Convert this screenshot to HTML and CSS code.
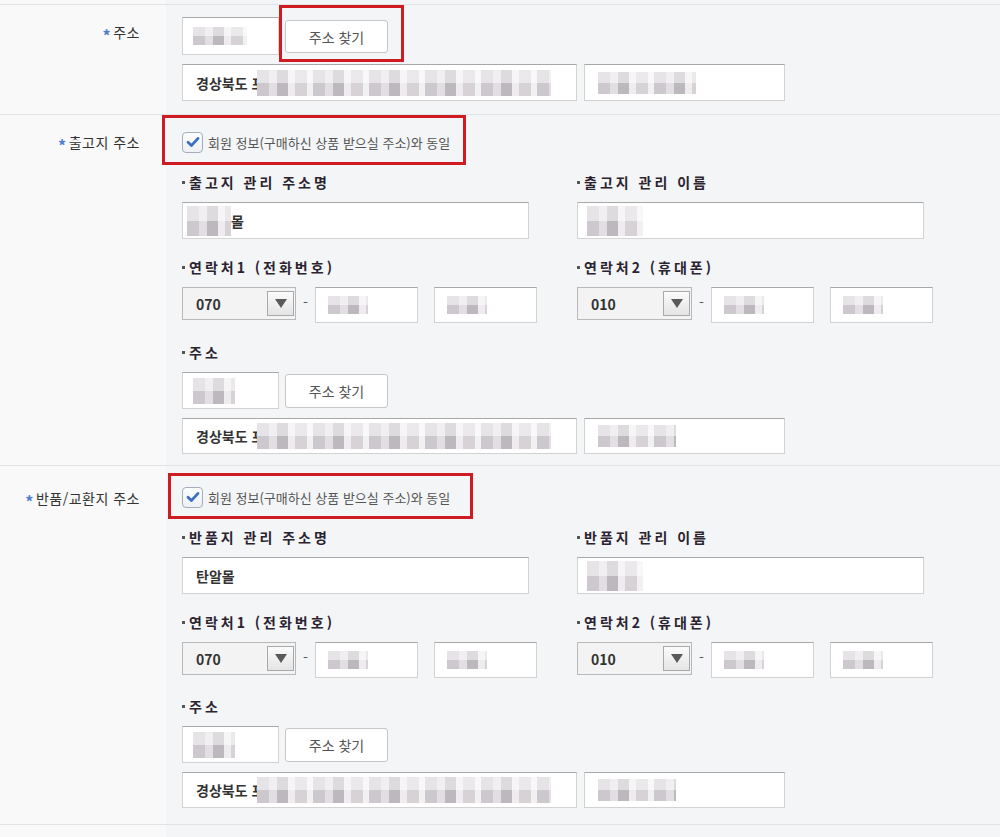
FILE: index.html
```html
<!DOCTYPE html>
<html lang="ko">
<head>
    <meta charset="UTF-8">
    <meta name="viewport" content="width=device-width, initial-scale=1.0">
    <title>판매자 정보 - 주소 설정</title>
    <link rel="stylesheet" href="styles.css">
</head>
<body>
    <div class="form">
        <!-- 주소 -->
        <div class="row row-addr">
            <div class="label"><span class="req">*</span>주소</div>
            <div class="content">
                <div class="line top-line">
                    <div class="field zip zip-top"><span class="blur b-zip"></span></div>
                    <div class="mark mark-btn"><button class="btn">주소 찾기</button></div>
                </div>
                <div class="line addr-line">
                    <div class="field addr1"><span class="val">경상북도 포</span><span class="blur b-long cover"></span></div>
                    <div class="field addr2"><span class="blur b-short"></span></div>
                </div>
            </div>
        </div>

        <!-- 출고지 주소 -->
        <div class="row row-ship">
            <div class="label"><span class="req">*</span>출고지 주소</div>
            <div class="content">
                <div class="mark mark-check ship">
                    <div class="check-line">
                        <span class="check"><svg width="14" height="12" viewBox="0 0 14 12"><path d="M2 6.3 L5.4 9.6 L12 2.4" fill="none" stroke="#3a6fc4" stroke-width="2.8" stroke-linecap="round" stroke-linejoin="round"/></svg></span>
                        <span class="check-text">회원 정보(구매하신 상품 받으실 주소)와 동일</span>
                    </div>
                </div>
                <div class="grid">
                    <div class="col">
                        <div class="sub">출고지 관리 주소명</div>
                        <div class="field name"><span class="blur b-name"></span><span class="val">몰</span></div>
                    </div>
                    <div class="col">
                        <div class="sub">출고지 관리 이름</div>
                        <div class="field name"><span class="blur b-name2"></span></div>
                    </div>
                    <div class="col">
                        <div class="sub">연락처1 (전화번호)</div>
                        <div class="phone">
                            <div class="select"><span>070</span><span class="arrow"><i></i></span></div>
                            <span class="dash">-</span>
                            <div class="field tel"><span class="blur b-tel"></span></div>
                            <div class="field tel tel2"><span class="blur b-tel"></span></div>
                        </div>
                    </div>
                    <div class="col">
                        <div class="sub">연락처2 (휴대폰)</div>
                        <div class="phone">
                            <div class="select wide"><span>010</span><span class="arrow"><i></i></span></div>
                            <span class="dash">-</span>
                            <div class="field tel"><span class="blur b-tel"></span></div>
                            <div class="field tel tel2"><span class="blur b-tel"></span></div>
                        </div>
                    </div>
                </div>
                <div class="sub sub-addr">주소</div>
                <div class="line">
                    <div class="field zip"><span class="blur b-zip2"></span></div>
                    <button class="btn">주소 찾기</button>
                </div>
                <div class="line addr-line">
                    <div class="field addr1 short"><span class="val">경상북도 포</span><span class="blur b-long cover"></span></div>
                    <div class="field addr2 short"><span class="blur b-short2"></span></div>
                </div>
            </div>
        </div>

        <!-- 반품/교환지 주소 -->
        <div class="row row-return">
            <div class="label"><span class="req">*</span>반품/교환지 주소</div>
            <div class="content">
                <div class="mark mark-check ret">
                    <div class="check-line">
                        <span class="check"><svg width="14" height="12" viewBox="0 0 14 12"><path d="M2 6.3 L5.4 9.6 L12 2.4" fill="none" stroke="#3a6fc4" stroke-width="2.8" stroke-linecap="round" stroke-linejoin="round"/></svg></span>
                        <span class="check-text">회원 정보(구매하신 상품 받으실 주소)와 동일</span>
                    </div>
                </div>
                <div class="grid">
                    <div class="col">
                        <div class="sub">반품지 관리 주소명</div>
                        <div class="field name"><span class="val">탄알몰</span></div>
                    </div>
                    <div class="col">
                        <div class="sub">반품지 관리 이름</div>
                        <div class="field name"><span class="blur b-name2"></span></div>
                    </div>
                    <div class="col">
                        <div class="sub">연락처1 (전화번호)</div>
                        <div class="phone">
                            <div class="select"><span>070</span><span class="arrow"><i></i></span></div>
                            <span class="dash">-</span>
                            <div class="field tel"><span class="blur b-tel"></span></div>
                            <div class="field tel tel2"><span class="blur b-tel"></span></div>
                        </div>
                    </div>
                    <div class="col">
                        <div class="sub">연락처2 (휴대폰)</div>
                        <div class="phone">
                            <div class="select wide"><span>010</span><span class="arrow"><i></i></span></div>
                            <span class="dash">-</span>
                            <div class="field tel"><span class="blur b-tel"></span></div>
                            <div class="field tel tel2"><span class="blur b-tel"></span></div>
                        </div>
                    </div>
                </div>
                <div class="sub sub-addr ret-addr">주소</div>
                <div class="line">
                    <div class="field zip"><span class="blur b-zip2"></span></div>
                    <button class="btn">주소 찾기</button>
                </div>
                <div class="line addr-line">
                    <div class="field addr1 short"><span class="val">경상북도 포</span><span class="blur b-long cover"></span></div>
                    <div class="field addr2 short"><span class="blur b-short2"></span></div>
                </div>
            </div>
        </div>

        <div class="row row-end">
            <div class="label"></div>
            <div class="content"></div>
        </div>
    </div>
</body>
</html>
```

FILE: styles.css
```css
body {
    margin: 0;
    padding: 0;
    background-color: #f4f5f7;
    font-family: "Noto Sans CJK KR", "Noto Sans", sans-serif;
    color: #333;
}
.form {
    padding-top: 4px;
    background: linear-gradient(90deg, #f9f9f9 166px, #f4f5f7 166px);
}
.row {
    display: flex;
    border-top: 1px solid #e2e3e6;
}
.label {
    width: 166px;
    flex-shrink: 0;
    box-sizing: border-box;
    padding-right: 26px;
    text-align: right;
    background-color: #f9f9f9;
    font-size: 14px;
    line-height: 20px;
    letter-spacing: 0.5px;
    color: #333;
}
.req {
    color: #4f7fd0;
    font-size: 16px;
    font-weight: bold;
    margin-right: 2px;
    position: relative;
    top: 4px;
}
.content {
    flex: 1;
    padding-left: 16px;
    background-color: #f4f5f7;
}
.row-addr .label { padding-top: 16px; }
.row-addr .content { padding-bottom: 13px; }
.row-ship .label { padding-top: 16px; }
.row-ship .content { padding-bottom: 11px; }
.row-return .label { padding-top: 21px; }
.row-return .content { padding-bottom: 16px; }
.row-end .content { height: 20px; }

/* fields */
.line {
    display: flex;
    align-items: center;
}
.top-line {
    align-items: flex-start;
}
.addr-line {
    margin-top: 9px;
    gap: 7px;
}
.row-addr .addr-line {
    margin-top: 2px;
}
.field {
    box-sizing: border-box;
    height: 37px;
    background-color: #fff;
    border: 1px solid #d2d2d2;
    border-top-color: #a8a8a8;
    display: flex;
    align-items: center;
    padding-left: 13px;
    font-size: 14px;
    font-weight: bold;
    color: #333;
    white-space: nowrap;
}
.val {
    position: relative;
}
.zip {
    width: 97px;
    margin-right: 6px;
}
.zip-top {
    height: 38px;
    margin-top: 12px;
    margin-right: 0;
}
.addr1 { width: 395px; }
.addr2 { width: 201px; }
.field.short { height: 36px; }
.name { width: 347px; }
.tel {
    width: 103px;
    height: 36px;
    padding-left: 12px;
}
.tel2 { margin-left: 16px; }

.btn {
    box-sizing: border-box;
    width: 103px;
    height: 34px;
    background-color: #fff;
    border: 1px solid #c6c6c6;
    border-radius: 3px;
    font-family: "Noto Sans CJK KR", "Noto Sans", sans-serif;
    font-size: 14px;
    color: #555;
    padding: 0;
    cursor: pointer;
}

/* red annotation boxes */
.mark {
    border: 3px solid #cf1b22;
}
.mark-btn {
    padding: 12px 13px 6px 3px;
}
.mark-btn .btn { height: 33px; }
.mark-check {
    box-sizing: border-box;
}
.ship {
    width: 304px;
    height: 50px;
    margin-left: -20px;
    padding: 14px 0 0 17px;
}
.ret {
    width: 305px;
    height: 46px;
    margin-left: -14px;
    margin-top: 7px;
    padding: 11px 0 0 11px;
}
.check-line {
    display: flex;
    align-items: center;
    height: 20px;
}
.check {
    box-sizing: border-box;
    width: 21px;
    height: 21px;
    border: 1px solid #a3adbb;
    border-radius: 4px;
    background: linear-gradient(#fbfcfd, #eef1f5);
    display: flex;
    align-items: center;
    justify-content: center;
    margin-right: 5px;
    flex-shrink: 0;
}
.check-text {
    font-size: 13px;
    letter-spacing: 0;
    color: #555;
    white-space: nowrap;
}

/* sub sections */
.grid {
    display: grid;
    grid-template-columns: 395px 395px;
    row-gap: 18px;
    margin-top: 7px;
}
.ret + .grid {
    margin-top: 8px;
}
.sub {
    height: 20px;
    line-height: 20px;
    margin-bottom: 10px;
    font-size: 14px;
    font-weight: bold;
    letter-spacing: 3px;
    color: #2b2430;
    display: flex;
    align-items: center;
}
.sub::before {
    content: "";
    width: 3px;
    height: 3px;
    background-color: #555;
    margin-right: 4px;
    margin-top: 1px;
}
.sub-addr {
    margin-top: 19px;
}
.ret-addr {
    margin-top: 18px;
}
.phone {
    display: flex;
    align-items: flex-start;
    margin-top: 3px;
}
.select {
    box-sizing: border-box;
    width: 114px;
    height: 33px;
    border: 1px solid #b9b9b9;
    background-color: #f3f3f3;
    display: flex;
    align-items: center;
    justify-content: space-between;
    padding: 0 1px 0 13px;
    font-size: 14px;
    font-weight: bold;
    color: #333;
}
.select.wide { width: 115px; }
.arrow {
    box-sizing: border-box;
    width: 27px;
    height: 25px;
    border: 1px solid #a9a9a9;
    background: linear-gradient(#fbfbfb, #e4e4e4);
    display: flex;
    align-items: center;
    justify-content: center;
}
.arrow i {
    width: 0;
    height: 0;
    border-left: 6px solid transparent;
    border-right: 6px solid transparent;
    border-top: 9px solid #5a5a5a;
}
.dash {
    width: 19px;
    text-align: center;
    line-height: 30px;
    color: #555;
    font-size: 14px;
}

/* pixelated blur over private data */
.blur {
    display: inline-block;
    height: 22px;
    background-image:
        linear-gradient(rgba(255, 255, 255, 0.5) 50%, rgba(255, 255, 255, 0) 50%),
        repeating-linear-gradient(90deg, #cdc8cd 0 12px, #e2dfe2 12px 20px, #bdb7be 20px 31px, #eeecee 31px 38px, #d6d2d6 38px 50px, #f2f1f2 50px 56px);
}
.cover {
    margin-left: -7px;
    position: relative;
    height: 26px;
}
.b-zip { width: 54px; margin-left: -3px; height: 18px; }
.b-zip2 { width: 42px; margin-left: -3px; height: 26px; }
.b-long { width: 294px; }
.b-short { width: 98px; }
.b-short2 { width: 78px; }
.b-name { width: 44px; margin-left: -9px; height: 30px; }
.b-name2 { width: 56px; margin-left: -4px; height: 30px; }
.b-tel { width: 40px; height: 18px; }
```
